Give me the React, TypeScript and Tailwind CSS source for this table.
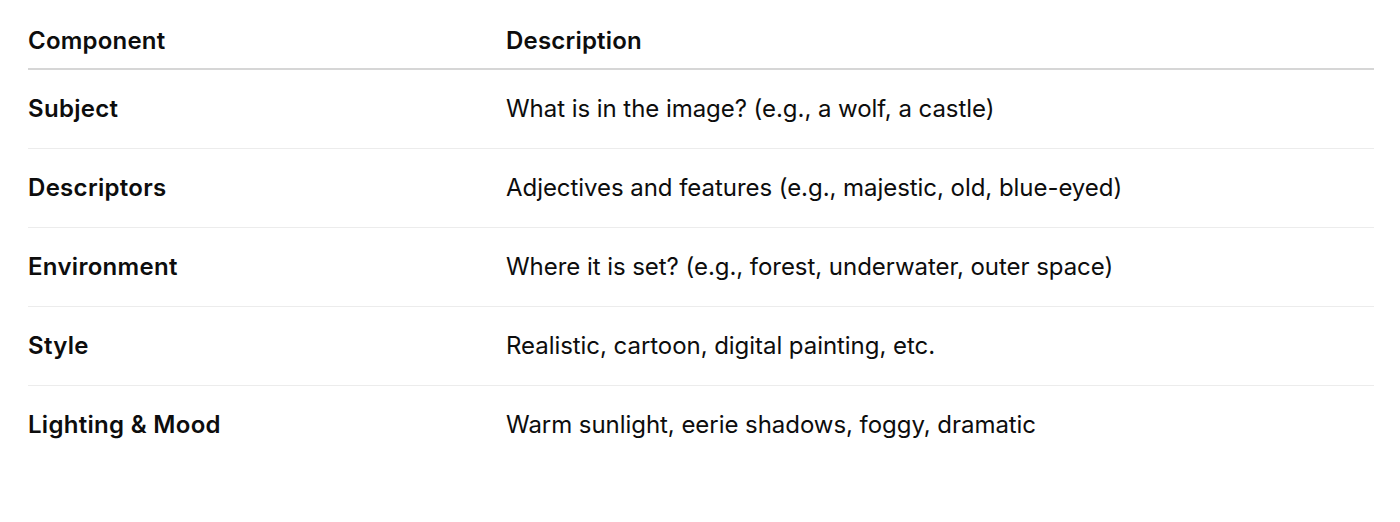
const rows = [
  { name: "Subject", desc: "What is in the image? (e.g., a wolf, a castle)" },
  { name: "Descriptors", desc: "Adjectives and features (e.g., majestic, old, blue-eyed)" },
  { name: "Environment", desc: "Where it is set? (e.g., forest, underwater, outer space)" },
  { name: "Style", desc: "Realistic, cartoon, digital painting, etc." },
  { name: "Lighting & Mood", desc: "Warm sunlight, eerie shadows, foggy, dramatic" },
];

export default function App() {
  return (
    <div className="w-[1400px] h-[522px] bg-white pl-[28px] pr-[26px] text-[24px] leading-[28px] text-[#0d0d0d] font-['Inter',sans-serif]">
      <div className="grid grid-cols-[478px_1fr] border-b-2 border-[#d6d6d6] pt-[27px] pb-[13px] font-semibold tracking-[0.2px]">
        <div>Component</div>
        <div>Description</div>
      </div>
      {rows.map((row, i) => (
        <div
          key={row.name}
          className={
            i < rows.length - 1
              ? "grid grid-cols-[478px_1fr] border-b border-[#ececec] py-[25px]"
              : "grid grid-cols-[478px_1fr] py-[25px]"
          }
        >
          <div className="font-semibold tracking-[0.3px]">{row.name}</div>
          <div className="tracking-[-0.05px]">{row.desc}</div>
        </div>
      ))}
    </div>
  );
}
